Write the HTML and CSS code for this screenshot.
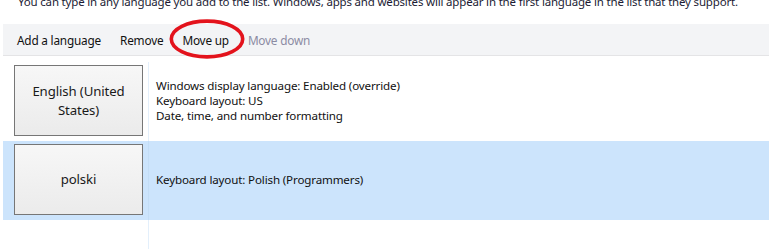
FILE: index.html
```html
<!DOCTYPE html>
<html>
<head>
<meta charset="utf-8">
<link rel="stylesheet" href="styles.css">
</head>
<body>
<div class="page">
  <p class="intro">You can type in any language you add to the list. Windows, apps and websites will appear in the first language in the list that they support.</p>
  <div class="toolbar">
    <span class="tool">Add a language</span>
    <span class="tool">Remove</span>
    <span class="tool marked">Move up
      <svg class="circle" width="79" height="44" viewBox="0 0 79 44"><ellipse cx="39.5" cy="22" rx="35.7" ry="17.9" fill="none" stroke="#e3131c" stroke-width="3.6"/></svg>
    </span>
    <span class="tool disabled">Move down</span>
  </div>
  <div class="list">
    <div class="row">
      <div class="cell-left"><div class="langbtn">English (United<br>States)</div></div>
      <div class="desc">Windows display language: Enabled (override)<br>Keyboard layout: US<br>Date, time, and number formatting</div>
    </div>
    <div class="row selected">
      <div class="cell-left"><div class="langbtn">polski</div></div>
      <div class="desc">Keyboard layout: Polish (Programmers)</div>
    </div>
    <div class="row filler">
      <div class="cell-left"></div>
      <div></div>
    </div>
  </div>
</div>
</body>
</html>
```

FILE: styles.css
```css
html, body {
  margin: 0;
  padding: 0;
  background: #ffffff;
  overflow: hidden;
}
.page {
  height: 249px;
  display: flex;
  flex-direction: column;
  font-family: "Noto Sans", "Open Sans", sans-serif;
  color: #1a1a1a;
}
.intro {
  margin: -8px 0 0 18px;
  font-size: 11.5px;
  letter-spacing: -0.18px;
  line-height: 20px;
  color: #1c1c34;
  white-space: nowrap;
}
.toolbar {
  margin: 12px 0 0 3px;
  height: 31px;
  background: #f3f4f6;
  border-bottom: 1px solid #e4e4e6;
  display: flex;
  align-items: center;
  padding-left: 14px;
  gap: 19px;
  font-size: 11.8px;
  letter-spacing: -0.2px;
  color: #111;
}
.tool {
  position: relative;
  white-space: nowrap;
}
.tool.disabled {
  color: #8b8ba3;
}
.circle {
  position: absolute;
  left: 50%;
  top: 50%;
  transform: translate(-50%, -50%);
  margin: -1px 0 0 1px;
}
.list {
  flex: 1;
  margin: 6px 0 0 3px;
  display: flex;
  flex-direction: column;
}
.row {
  display: grid;
  grid-template-columns: 146px 1fr;
  height: 79px;
  align-items: stretch;
}
.row.selected {
  background: #cce4fc;
}
.row.filler {
  flex: 1;
  height: auto;
}
.cell-left {
  border-right: 1px solid #e3effb;
  padding: 3px 0 0 11px;
}
.selected .cell-left {
  border-right-color: #c3ddf6;
}
.langbtn {
  width: 127px;
  height: 69px;
  border: 1px solid #767676;
  background: linear-gradient(#f7f7f7, #ebebeb);
  display: flex;
  align-items: center;
  justify-content: center;
  text-align: center;
  font-size: 13.2px;
  letter-spacing: -0.1px;
  line-height: 19px;
  color: #1a1a1a;
}
.desc {
  display: flex;
  align-items: center;
  padding-left: 7px;
  font-size: 11.6px;
  letter-spacing: -0.15px;
  line-height: 14.7px;
  color: #111;
}
```
